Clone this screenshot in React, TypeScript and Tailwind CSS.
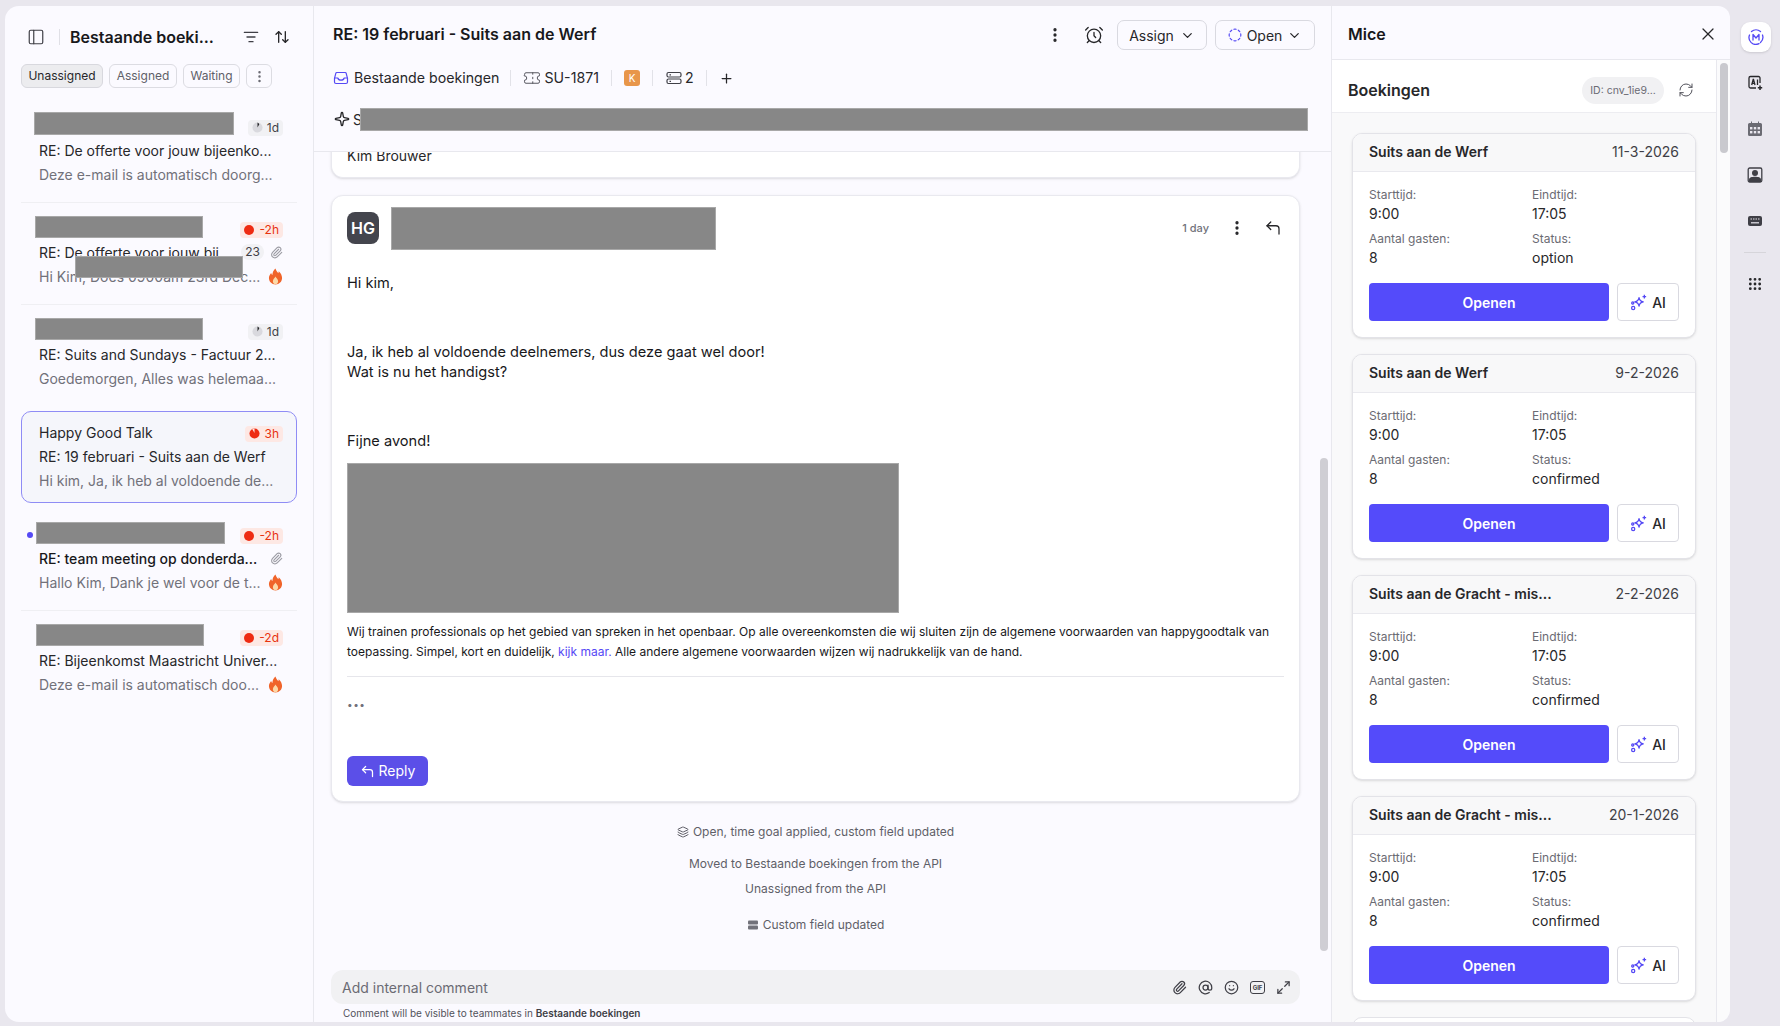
import React from 'react';
import {
  AlarmClock,
  ArrowUpDown,
  AtSign,
  ChevronDown,
  CircleDashed,
  CornerUpLeft,
  EllipsisVertical,
  Grip,
  Layers,
  ListFilter,
  Maximize2,
  PanelLeft,
  Paperclip,
  Plus,
  RefreshCw,
  Smile,
  Sparkle,
  Ticket,
  X,
} from 'lucide-react';

const Redacted: React.FC<{ className: string }> = ({ className }) => (
  <div className={`absolute bg-[#878787] border border-[#a8a8a8] ${className}`} />
);

const Flame = () => (
  <svg viewBox="0 0 16 18" className="w-[15px] h-[17px]">
    <path d="M8 .5c.6 2.600 2 3.600 3 5 .3-.7.4-1.300.4-2 2.300 1.900 3.600 4.500 3.600 7.200C15 14.700 12 17.500 8 17.500s-7-2.800-7-6.800c0-2.400 1.300-4 2.400-5.500.2 1 .6 1.700 1.300 2.200C4.800 4.500 6 2.200 8 .5z" fill="#f0642a" />
    <path d="M8 9c.4 1.300 2.800 2.600 2.800 5 0 1.900-1.300 3.200-2.800 3.200S5.200 15.900 5.200 14C5.200 11.800 7.500 10.500 8 9z" fill="#fcd9a8" />
  </svg>
);

const Dial: React.FC<{ red?: boolean }> = ({ red }) =>
  red ? (
    <svg viewBox="0 0 12 12" className="w-[11px] h-[11px]">
      <circle cx="6" cy="6" r="5.500" fill="#ee2b12" />
      <path d="M6 .5v5L3.500 1.200" fill="#fde8e4" />
    </svg>
  ) : (
    <svg viewBox="0 0 12 12" className="w-[11px] h-[11px]">
      <circle cx="6" cy="6" r="5.500" fill="#d9d9de" />
      <path d="M6 .5V6l2-3.500A5 5 0 0 0 6 .5z" fill="#27272a" />
    </svg>
  );

const Badge: React.FC<{ label: string; kind: 'gray' | 'red' | 'warm' }> = ({ label, kind }) => (
  <span
    className={
      kind === 'gray'
        ? 'flex items-center gap-[4px] h-[16px] mt-[3px] px-[4px] rounded-[4px] bg-[#f1f1f4] text-[12px] text-[#3f3f46]'
        : 'flex items-center gap-[4px] h-[16px] mt-[3px] px-[4px] rounded-[4px] bg-[#fde8e4] text-[12px] text-[#e8320e]'
    }
  >
    {kind === 'gray' && <Dial />}
    {kind === 'warm' && <Dial red />}
    {kind === 'red' && <span className="w-[10px] h-[10px] rounded-full bg-[#ee2b12] mr-[1px]" />}
    {label}
  </span>
);

type Conversation = {
  name?: string;
  subject: string;
  preview: string;
  badge: string;
  kind: 'gray' | 'red' | 'warm';
  count?: string;
  clip?: boolean;
  fire?: boolean;
  unread?: boolean;
  selected?: boolean;
  masks: string[];
};

const conversations: Conversation[] = [
  {
    subject: 'RE: De offerte voor jouw bijeenko...',
    preview: 'Deze e-mail is automatisch doorg...',
    badge: '1d',
    kind: 'gray',
    masks: ['left-[13px] top-[7px] w-[200px] h-[23px]'],
  },
  {
    subject: 'RE: De offerte voor jouw bij...',
    preview: 'Hi Kim, Does 0900am 23rd Dec...',
    badge: '-2h',
    kind: 'red',
    count: '23',
    clip: true,
    fire: true,
    masks: ['left-[14px] top-[9px] w-[168px] h-[22px]', 'left-[54px] top-[49px] w-[168px] h-[22px]'],
  },
  {
    subject: 'RE: Suits and Sundays - Factuur 2...',
    preview: 'Goedemorgen, Alles was helemaa...',
    badge: '1d',
    kind: 'gray',
    masks: ['left-[14px] top-[9px] w-[168px] h-[22px]'],
  },
  {
    name: 'Happy Good Talk',
    subject: 'RE: 19 februari - Suits aan de Werf',
    preview: 'Hi kim, Ja, ik heb al voldoende de...',
    badge: '3h',
    kind: 'warm',
    selected: true,
    masks: [],
  },
  {
    subject: 'RE: team meeting op donderda...',
    preview: 'Hallo Kim, Dank je wel voor de t...',
    badge: '-2h',
    kind: 'red',
    clip: true,
    fire: true,
    unread: true,
    masks: ['left-[15px] top-[9px] w-[189px] h-[22px]'],
  },
  {
    subject: 'RE: Bijeenkomst Maastricht Univer...',
    preview: 'Deze e-mail is automatisch doo...',
    badge: '-2d',
    kind: 'red',
    fire: true,
    masks: ['left-[15px] top-[9px] w-[168px] h-[22px]'],
  },
];

const ConversationItem: React.FC<{ item: Conversation }> = ({ item }) => (
  <div
    className={
      item.selected
        ? 'relative h-[92px] pl-[17px] pr-[13px] py-[8px] rounded-[10px] border border-[#8f8cf5] bg-[#f5f6fb]'
        : 'relative h-[92px] pl-[18px] pr-[14px] py-[9px]'
    }
  >
    {item.unread && <span className="absolute left-[6px] top-[19px] w-[6px] h-[6px] rounded-full bg-[#5549f5]" />}
    <div className="flex items-center justify-between h-[24px]">
      <span className="text-[14px] text-[#27272a]">{item.name}</span>
      <Badge label={item.badge} kind={item.kind} />
    </div>
    <div className="flex items-center justify-between h-[24px]">
      <span className={item.unread ? 'text-[14px] font-medium text-[#18181b] whitespace-nowrap' : 'text-[14px] text-[#27272a] whitespace-nowrap'}>
        {item.subject}
      </span>
      <span className="flex items-center gap-[6px]">
        {item.count && <span className="h-[16px] px-[4px] rounded-full bg-[#f1f1f4] text-[12px] leading-[16px] text-[#3f3f46]">{item.count}</span>}
        {item.clip && <Paperclip className="w-[13px] h-[13px] text-[#9b9ba3]" />}
      </span>
    </div>
    <div className="flex items-center justify-between h-[24px]">
      <span className="text-[14px] text-[#71717a] whitespace-nowrap">{item.preview}</span>
      {item.fire && <Flame />}
    </div>
    {item.masks.map((m) => (
      <Redacted key={m} className={m} />
    ))}
  </div>
);

const Sidebar = () => (
  <aside className="w-[309px] shrink-0 border-r border-[#e8e8ee] flex flex-col">
    <div className="flex items-center h-[38px] mt-[12px] pl-[22px] pr-[23px]">
      <PanelLeft className="w-[18px] h-[18px] text-[#3f3f46]" strokeWidth={1.6} />
      <span className="w-px h-[16px] bg-[#e0e0e6] ml-[14px] mr-[10px]" />
      <span className="text-[16px] font-semibold text-[#18181b] whitespace-nowrap">Bestaande boeki...</span>
      <ListFilter className="w-[16px] h-[16px] ml-auto text-[#3f3f46]" />
      <ArrowUpDown className="w-[16px] h-[16px] ml-[15px] text-[#27272a]" />
    </div>
    <div className="flex gap-[6px] mt-[8px] px-[16px]">
      <span className="w-[82px] h-[24px] text-center rounded-[6px] border border-[#d8d8de] bg-[#ececef] text-[12px] leading-[22px] text-[#27272a]">Unassigned</span>
      <span className="w-[68px] h-[24px] text-center rounded-[6px] border border-[#dcdce2] text-[12px] leading-[22px] text-[#5f5f68]">Assigned</span>
      <span className="w-[57px] h-[24px] text-center rounded-[6px] border border-[#dcdce2] text-[12px] leading-[22px] text-[#5f5f68]">Waiting</span>
      <span className="flex items-center justify-center w-[26px] h-[24px] rounded-[6px] border border-[#dcdce2]">
        <EllipsisVertical className="w-[15px] h-[15px] text-[#6b6b73]" />
      </span>
    </div>
    <div className="mt-[17px] pl-[16px] pr-[16px]">
      {conversations.map((item, i) => {
        const next = conversations[i + 1];
        const line = next && !item.selected && !next.selected;
        return (
          <React.Fragment key={item.subject}>
            <ConversationItem item={item} />
            {next && (
              <div className="h-[10px] flex items-center">
                {line && <div className="w-full h-px bg-[#efeff3]" />}
              </div>
            )}
          </React.Fragment>
        );
      })}
    </div>
  </aside>
);

const Divider = () => <span className="w-px h-[16px] bg-[#e2e2e8]" />;

const InboxIcon = () => (
  <svg viewBox="0 0 16 16" className="w-[16px] h-[16px]" fill="none" stroke="#5549f5" strokeWidth="1.200" strokeLinejoin="round">
    <path d="M3.800 2.500h8.400a1 1 0 0 1 1 .8l1.300 5v3.700a1.500 1.500 0 0 1-1.500 1.500H3a1.500 1.500 0 0 1-1.500-1.500V8.300l1.300-5a1 1 0 0 1 1-.8z" />
    <path d="M1.500 8h3.300c.4 1.400 1.700 2.200 3.200 2.200s2.800-.8 3.200-2.200h3.300" />
  </svg>
);

const ServerIcon = () => (
  <svg viewBox="0 0 16 16" className="w-[16px] h-[16px]" fill="none" stroke="#3f3f46" strokeWidth="1.200">
    <rect x="1" y="2.500" width="14" height="4.500" rx="1.500" />
    <rect x="1" y="9" width="14" height="4.500" rx="1.500" />
    <path d="M3.500 4.800h1.500M3.500 11.300h1.500" />
  </svg>
);

const ServerMini = () => (
  <svg viewBox="0 0 12 12" className="w-[12px] h-[12px]" fill="#71717a">
    <rect x="1" y="1.500" width="10" height="4" rx="1" />
    <rect x="1" y="6.500" width="10" height="4" rx="1" />
  </svg>
);

const GifIcon = () => (
  <span className="flex items-center justify-center w-[15px] h-[13px] rounded-[3px] border border-[#3f3f46] text-[6px] font-bold text-[#3f3f46]">GIF</span>
);

const MainPanel = () => (
  <main className="relative w-[1018px] shrink-0 border-r border-[#e8e8ee] flex flex-col">
    <header className="h-[146px] shrink-0 border-b border-[#e8e8ee] px-[19px]">
      <div className="flex items-center h-[30px] mt-[14px]">
        <h1 className="-mt-[2px] text-[16px] font-semibold text-[#18181b]">RE: 19 februari - Suits aan de Werf</h1>
        <EllipsisVertical className="w-[18px] h-[18px] ml-auto text-[#27272a]" strokeWidth={2.400} />
        <AlarmClock className="w-[20px] h-[20px] ml-[20px] text-[#27272a]" strokeWidth={1.600} />
        <button className="flex items-center gap-[6px] h-[30px] w-[90px] justify-center ml-[13px] rounded-[7px] border border-[#d9d9e0] text-[14px] text-[#27272a]">
          Assign <ChevronDown className="w-[15px] h-[15px]" />
        </button>
        <button className="flex items-center gap-[5px] h-[30px] w-[100px] justify-center ml-[8px] -mr-[3px] rounded-[7px] border border-[#d9d9e0] text-[14px] text-[#27272a]">
          <CircleDashed className="w-[14px] h-[14px] text-[#5549f5]" /> Open <ChevronDown className="w-[15px] h-[15px]" />
        </button>
      </div>
      <div className="flex items-center h-[24px] mt-[16px] text-[14.2px] text-[#27272a]">
        <InboxIcon />
        <span className="ml-[5px]">Bestaande boekingen</span>
        <span className="ml-[11px] mr-[12px] flex"><Divider /></span>
        <Ticket className="w-[18px] h-[18px] text-[#52525b]" strokeWidth={1.300} />
        <span className="ml-[3px]">SU-1871</span>
        <span className="ml-[12px] mr-[12px] flex"><Divider /></span>
        <span className="flex items-center justify-center w-[16px] h-[16px] rounded-[3px] bg-[#e8964a] text-[10px] text-white">K</span>
        <span className="ml-[12px] mr-[13px] flex"><Divider /></span>
        <ServerIcon />
        <span className="ml-[3px]">2</span>
        <span className="ml-[12px] mr-[12px] flex"><Divider /></span>
        <Plus className="w-[15px] h-[15px]" />
      </div>
      <div className="relative flex items-center h-[24px] mt-[17px] text-[14px] text-[#27272a]">
        <Sparkle className="ml-[1px] w-[16px] h-[16px]" />
        <span className="ml-[3px]">S</span>
        <Redacted className="left-[27px] top-[1px] w-[948px] h-[23px]" />
      </div>
    </header>

    <div className="flex-1 overflow-hidden pl-[17px] pr-[31px]">
      <div className="h-[32px] pl-[15px] rounded-b-xl border border-t-0 border-[#e9e9ef] bg-white shadow-sm text-[14px] leading-[20px] text-[#27272a]">
        <div className="-mt-[6px]">Kim Brouwer</div>
      </div>
      <article className="relative mt-[17px] h-[607px] pl-[15px] pr-[15px] pt-[16px] rounded-xl border border-[#e9e9ef] bg-white shadow-sm text-[14.6px] leading-[20px] text-[#18181b]">
        <div className="flex items-center h-[32px] pr-[2px]">
          <span className="flex items-center justify-center w-[32px] h-[32px] rounded-[8px] bg-[#44454d] text-[16px] font-semibold text-white">HG</span>
          <span className="ml-auto text-[11px] font-medium text-[#71717a]">1 day</span>
          <EllipsisVertical className="w-[18px] h-[18px] ml-[19px] text-[#27272a]" strokeWidth={2.400} />
          <CornerUpLeft className="w-[18px] h-[18px] ml-[18px] text-[#27272a]" strokeWidth={1.700} />
        </div>
        <Redacted className="left-[59px] top-[11px] w-[325px] h-[43px]" />
        <p className="mt-[29px]">Hi kim,</p>
        <p className="mt-[49px]">Ja, ik heb al voldoende deelnemers, dus deze gaat wel door!</p>
        <p>Wat is nu het handigst?</p>
        <p className="mt-[49px]">Fijne avond!</p>
        <div className="mt-[12px] w-[552px] h-[150px] bg-[#878787] border border-[#a8a8a8]" />
        <p className="mt-[9px] text-[12px] leading-[20px]">
          Wij trainen professionals op het gebied van spreken in het openbaar. Op alle overeenkomsten die wij sluiten zijn de algemene voorwaarden van happygoodtalk van toepassing. Simpel, kort en duidelijk, <span className="text-[#5549f5]">kijk maar.</span> Alle andere algemene voorwaarden wijzen wij nadrukkelijk van de hand.
        </p>
        <div className="mt-[14px] h-px bg-[#e6e6eb]" />
        <div className="mt-[19px] text-[10px] leading-[16px] tracking-[0.5px] text-[#71717a]">•••</div>
        <button className="flex items-center gap-[4px] mt-[44px] h-[30px] w-[81px] justify-center rounded-[6px] bg-[#5b4fe8] text-[14px] text-white">
          <CornerUpLeft className="w-[15px] h-[15px]" /> Reply
        </button>
      </article>
      <div className="mt-[22px] flex flex-col items-center text-[12px] leading-[16px] text-[#5f5f68]">
        <div className="flex items-center gap-[4px]"><Layers className="w-[12px] h-[12px]" />Open, time goal applied, custom field updated</div>
        <div className="mt-[16px]">Moved to Bestaande boekingen from the API</div>
        <div className="mt-[9px]">Unassigned from the API</div>
        <div className="mt-[20px] flex items-center gap-[4px]"><ServerMini />Custom field updated</div>
      </div>
    </div>

    <div className="shrink-0 h-[52px] pl-[17px] pr-[31px]">
      <div className="flex items-center h-[34px] pl-[11px] pr-[9px] gap-[11px] rounded-xl bg-[#f1f1f3] text-[#3f3f46]">
        <span className="mr-auto text-[14px] text-[#6b6b73]">Add internal comment</span>
        <Paperclip className="w-[15px] h-[15px]" />
        <AtSign className="w-[15px] h-[15px]" />
        <Smile className="w-[15px] h-[15px]" />
        <GifIcon />
        <Maximize2 className="w-[15px] h-[15px]" />
      </div>
      <p className="mt-[3px] pl-[12px] text-[10px] leading-[12px] text-[#52525b]">
        Comment will be visible to teammates in <span className="font-semibold text-[#3f3f46]">Bestaande boekingen</span>
      </p>
    </div>

    <div className="absolute right-[3px] top-[452px] w-[8px] h-[493px] rounded-full bg-[#cfced4]" />
  </main>
);

const AiSparkles = () => (
  <svg viewBox="0 0 16 16" className="w-[17px] h-[17px]" fill="none" stroke="#5549f5" strokeWidth="1.200" strokeLinejoin="round">
    <path d="M8.500 3.500c.4 2.400 1.300 3.600 4 4-2.700.5-3.600 1.600-4 4-.4-2.400-1.300-3.500-4-4 2.700-.4 3.600-1.600 4-4z" />
    <circle cx="3" cy="13.200" r="1.500" />
    <circle cx="2.600" cy="8.500" r="1" />
    <path d="M13.500 .8v3.400M11.800 2.500h3.400" />
  </svg>
);

const bookings = [
  { title: 'Suits aan de Werf', date: '11-3-2026', status: 'option' },
  { title: 'Suits aan de Werf', date: '9-2-2026', status: 'confirmed' },
  { title: 'Suits aan de Gracht - mis...', date: '2-2-2026', status: 'confirmed' },
  { title: 'Suits aan de Gracht - mis...', date: '20-1-2026', status: 'confirmed' },
];

const Field: React.FC<{ label: string; value: string }> = ({ label, value }) => (
  <div>
    <div className="text-[12px] leading-[16px] text-[#6b6b73]">{label}</div>
    <div className="mt-[1px] text-[14px] leading-[20px] text-[#27272a]">{value}</div>
  </div>
);

const BookingCard: React.FC<{ title: string; date: string; status: string }> = ({ title, date, status }) => (
  <div className="h-[205px] shrink-0 rounded-[10px] border border-[#e3e3e8] bg-white shadow-sm overflow-hidden">
    <div className="flex items-center justify-between h-[38px] px-[16px] pb-[2px] border-b border-[#e9e9ee] bg-[#f8f8f9]">
      <span className="text-[14px] font-semibold text-[#27272a]">{title}</span>
      <span className="text-[14px] text-[#3f3f46]">{date}</span>
    </div>
    <div className="px-[16px] pt-[15px]">
      <div className="grid grid-cols-[163px_1fr] gap-y-[7px]">
        <Field label="Starttijd:" value="9:00" />
        <Field label="Eindtijd:" value="17:05" />
        <Field label="Aantal gasten:" value="8" />
        <Field label="Status:" value={status} />
      </div>
      <div className="flex gap-[8px] mt-[15px]">
        <button className="flex-1 h-[38px] rounded-[4px] bg-[#544bfa] text-[14px] font-semibold text-white">Openen</button>
        <button className="flex items-center justify-center gap-[5px] w-[62px] h-[38px] rounded-[4px] border border-[#d9d9e0] text-[14px] font-medium text-[#27272a]">
          <AiSparkles /> AI
        </button>
      </div>
    </div>
  </div>
);

const RightPanel = () => (
  <section className="w-[398px] shrink-0 rounded-tr-xl rounded-br-xl overflow-hidden flex flex-col">
    <div className="flex items-center justify-between h-[54px] shrink-0 pl-[16px] pr-[12px] pt-[2px] border-b border-[#e8e8ee]">
      <h2 className="text-[16px] font-semibold text-[#18181b]">Mice</h2>
      <X className="w-[20px] h-[20px] text-[#27272a]" strokeWidth={1.500} />
    </div>
    <div className="flex flex-1 min-h-0">
      <div className="w-[384px] flex flex-col min-h-0">
        <div className="flex items-center h-[53px] shrink-0 pl-[16px] pr-[22px] pt-[8px] bg-white border-b border-[#ededf1]">
          <span className="text-[16px] font-semibold text-[#27272a]">Boekingen</span>
          <span className="ml-auto w-[82px] h-[27px] text-center rounded-full bg-[#f1f1f3] text-[10.5px] leading-[27px] text-[#6b6b73]">ID: cnv_1ie9...</span>
          <RefreshCw className="w-[16px] h-[16px] ml-[14px] text-[#52525b]" strokeWidth={1.500} />
        </div>
        <div className="flex-1 min-h-0 overflow-hidden bg-[#f9f9fa] px-[20px] pt-[20px] flex flex-col gap-[16px]">
          {bookings.map((b) => (
            <BookingCard key={b.date} {...b} />
          ))}
          <div className="h-[205px] shrink-0 rounded-[10px] border border-[#e3e3e8] bg-white" />
        </div>
      </div>
      <div className="w-[14px] border-l border-[#e8e8ee] bg-[#fbfbfc] pl-[3px] pt-[3px]">
        <div className="w-[8px] h-[90px] rounded-full bg-[#c9c9ce]" />
      </div>
    </div>
  </section>
);

const RailIcon: React.FC<{ children: React.ReactNode }> = ({ children }) => (
  <div className="flex items-center justify-center h-[46px] text-[#3f3f46]">{children}</div>
);

const Rail = () => (
  <nav className="w-[50px] shrink-0 pt-[16px] px-[11px]">
    <div className="flex items-center justify-center w-[30px] h-[30px] rounded-[9px] bg-white shadow-sm">
      <svg viewBox="0 0 16 16" className="w-[16px] h-[16px]" fill="none" stroke="#5549f5" strokeWidth="1.300" strokeLinecap="round" strokeLinejoin="round">
        <path d="M3.500 2.500a7 7 0 0 1 9 0M14.500 6a7 7 0 0 1-2 7.500M11 14.600a7 7 0 0 1-8-1.200A7 7 0 0 1 1.500 6" />
        <path d="M5 11V5.500l3 3.500 3-3.500V11" />
      </svg>
    </div>
    <div className="mt-[8px] -mx-[11px]">
      <RailIcon>
        <svg viewBox="0 0 16 16" className="w-[16px] h-[16px]" fill="none" stroke="#27272a" strokeWidth="1.300">
          <path d="M13 8V3a1.500 1.500 0 0 0-1.500-1.500h-8A1.500 1.500 0 0 0 2 3v8.500A1.500 1.500 0 0 0 3.500 13H9" />
          <path d="M4.700 10l1.500-5.500h.3L8 10M5.300 8.300h2.300M10.500 4.500V10" />
          <path d="M13 10.500v4.500M10.800 12.700h4.400" strokeWidth="1.500" />
        </svg>
      </RailIcon>
      <RailIcon>
        <svg viewBox="0 0 16 16" className="w-[16px] h-[16px]" fill="#6b6b73">
          <path d="M4 .5h1V2h6V.5h1V2h1.500A1.500 1.500 0 0 1 15 3.500v10a1.500 1.500 0 0 1-1.500 1.500h-11A1.500 1.500 0 0 1 1 13.500v-10A1.500 1.500 0 0 1 2.500 2H4z" />
          <g fill="#e9e7ee">
            <rect x="3" y="6" width="2.400" height="2.400" /><rect x="6.800" y="6" width="2.400" height="2.400" /><rect x="10.600" y="6" width="2.400" height="2.400" />
            <rect x="3" y="10" width="2.400" height="2.400" /><rect x="6.800" y="10" width="2.400" height="2.400" /><rect x="10.600" y="10" width="2.400" height="2.400" />
          </g>
        </svg>
      </RailIcon>
      <RailIcon>
        <svg viewBox="0 0 16 16" className="w-[16px] h-[16px]">
          <rect x="1.200" y="1" width="13.600" height="14" rx="1.500" fill="none" stroke="#3f3f46" strokeWidth="1.300" />
          <circle cx="8" cy="6" r="3" fill="#3f3f46" />
          <path d="M2 15v-2.500C2 10.500 5 9.800 8 9.800s6 .7 6 2.700V15z" fill="#3f3f46" />
        </svg>
      </RailIcon>
      <RailIcon>
        <svg viewBox="0 0 16 16" className="w-[16px] h-[16px]">
          <rect x="1" y="3" width="14" height="10" rx="2" fill="#3f3f46" />
          <path d="M4 9.800h8" stroke="#e9e7ee" strokeWidth="1.200" />
          <path d="M3.500 6h1.500M6 6h1.500M8.500 6H10M11 6h1.500" stroke="#e9e7ee" strokeWidth="1" />
        </svg>
      </RailIcon>
    </div>
    <div className="mx-[3px] mt-[8px] h-px bg-[#d6d5da]" />
    <div className="mt-[8px] -mx-[11px]">
      <RailIcon>
        <Grip className="w-[16px] h-[16px] text-[#27272a]" strokeWidth={2.200} />
      </RailIcon>
    </div>
  </nav>
);

const App: React.FC = () => {
  return (
    <div className="flex w-[1780px] h-[1026px] overflow-hidden bg-[#e9e7ee] pt-[6px] pb-[4px] pl-[5px] font-[Inter,sans-serif]">
      <div className="flex rounded-l-[14px] rounded-r-xl overflow-hidden bg-[#fbfaff]">
        <Sidebar />
        <MainPanel />
        <RightPanel />
      </div>
      <Rail />
    </div>
  );
};

export default App;
